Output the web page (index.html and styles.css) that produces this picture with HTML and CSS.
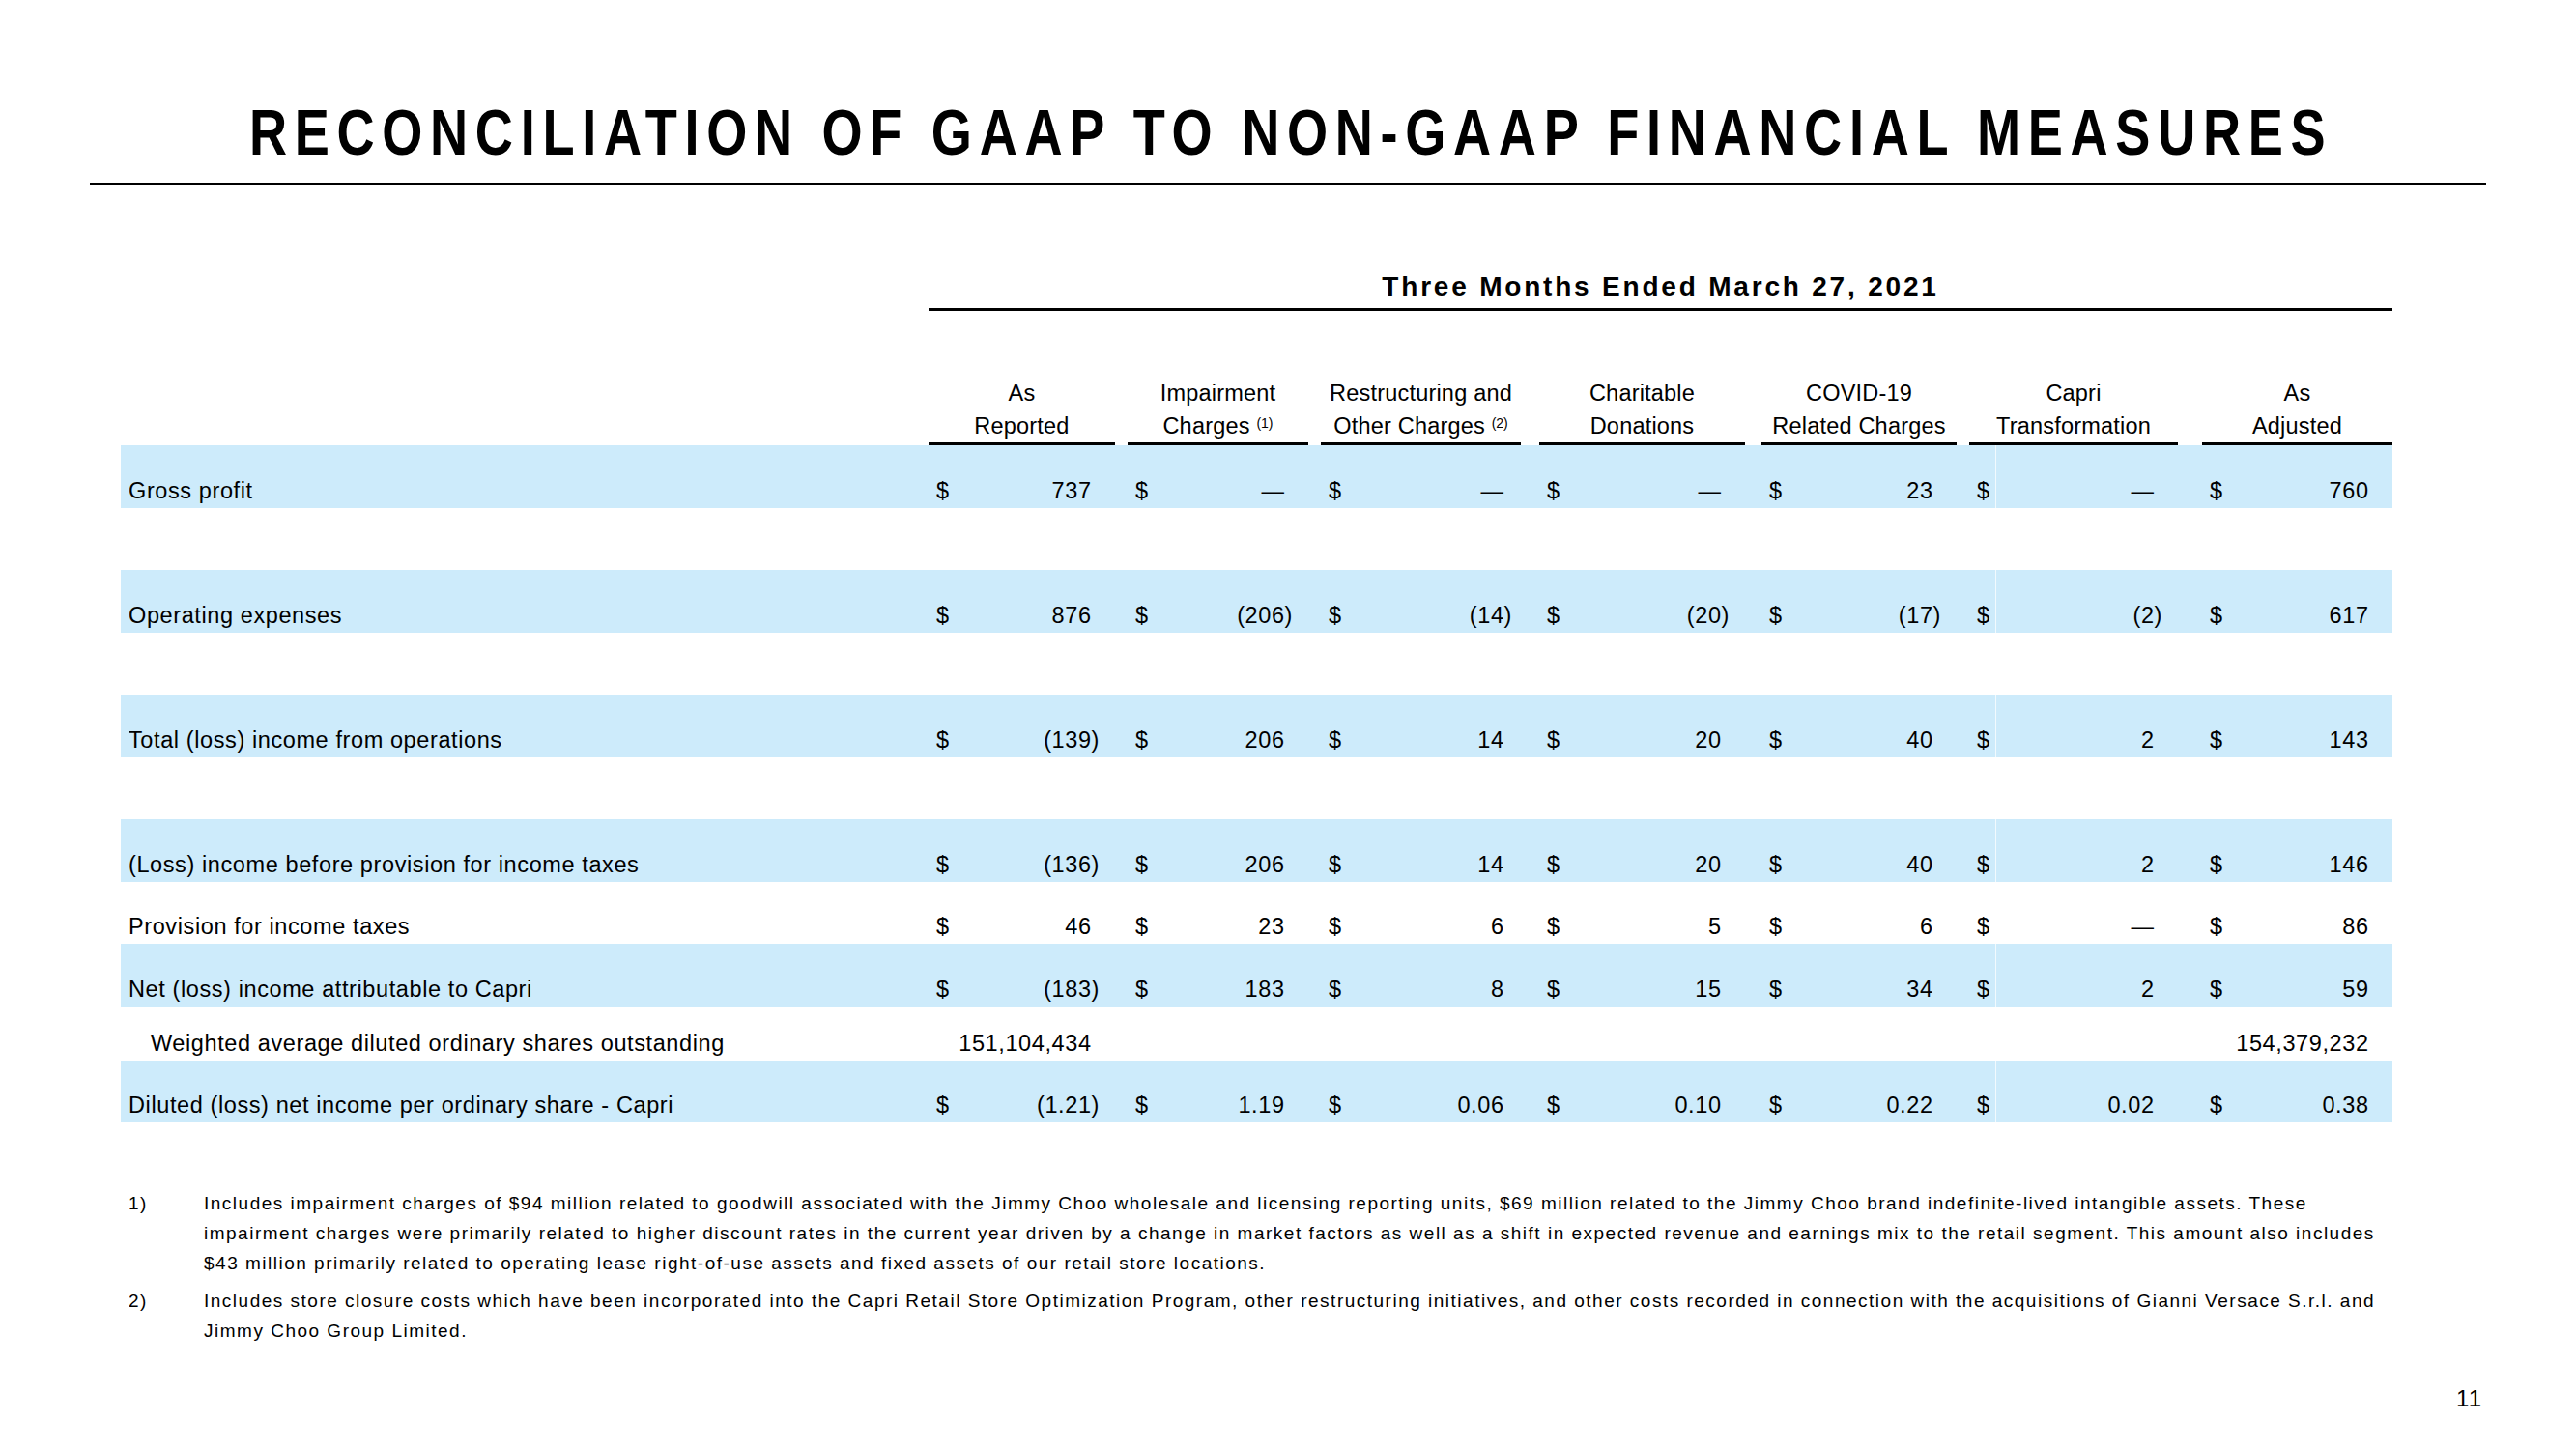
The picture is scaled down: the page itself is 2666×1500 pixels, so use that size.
FILE: index.html
```html
<!DOCTYPE html>
<html lang="en">
<head>
<meta charset="utf-8">
<title>Reconciliation of GAAP to Non-GAAP Financial Measures</title>
<link rel="stylesheet" href="styles.css">
</head>
<body>
<div class="slide">
  <h1 class="title">RECONCILIATION OF GAAP TO NON-GAAP FINANCIAL MEASURES</h1>
  <div class="title-rule"></div>

  <div class="table">
    <div class="row period-row">
      <div></div>
      <div class="period">Three Months Ended March 27, 2021</div>
    </div>

    <div class="row head-row">
      <div></div>
      <div class="h">As<br>Reported</div>
      <div class="h">Impairment<br>Charges <sup>(1)</sup></div>
      <div class="h">Restructuring and<br>Other Charges <sup>(2)</sup></div>
      <div class="h">Charitable<br>Donations</div>
      <div class="h">COVID-19<br>Related Charges</div>
      <div class="h">Capri<br>Transformation</div>
      <div class="h">As<br>Adjusted</div>
    </div>

    <div class="row band">
      <div class="lbl">Gross profit</div>
      <div class="v"><span>$</span><span class="n">737</span></div>
      <div class="v"><span>$</span><span class="n">—</span></div>
      <div class="v"><span>$</span><span class="n">—</span></div>
      <div class="v"><span>$</span><span class="n">—</span></div>
      <div class="v"><span>$</span><span class="n">23</span></div>
      <div class="v"><span>$</span><span class="n">—</span></div>
      <div class="v"><span>$</span><span class="n">760</span></div>
    </div>
    <div class="row spacer"></div>

    <div class="row band">
      <div class="lbl">Operating expenses</div>
      <div class="v"><span>$</span><span class="n">876</span></div>
      <div class="v"><span>$</span><span class="n neg">(206)</span></div>
      <div class="v"><span>$</span><span class="n neg">(14)</span></div>
      <div class="v"><span>$</span><span class="n neg">(20)</span></div>
      <div class="v"><span>$</span><span class="n neg">(17)</span></div>
      <div class="v"><span>$</span><span class="n neg">(2)</span></div>
      <div class="v"><span>$</span><span class="n">617</span></div>
    </div>
    <div class="row spacer"></div>

    <div class="row band">
      <div class="lbl">Total (loss) income from operations</div>
      <div class="v"><span>$</span><span class="n neg">(139)</span></div>
      <div class="v"><span>$</span><span class="n">206</span></div>
      <div class="v"><span>$</span><span class="n">14</span></div>
      <div class="v"><span>$</span><span class="n">20</span></div>
      <div class="v"><span>$</span><span class="n">40</span></div>
      <div class="v"><span>$</span><span class="n">2</span></div>
      <div class="v"><span>$</span><span class="n">143</span></div>
    </div>
    <div class="row spacer"></div>

    <div class="row band">
      <div class="lbl">(Loss) income before provision for income taxes</div>
      <div class="v"><span>$</span><span class="n neg">(136)</span></div>
      <div class="v"><span>$</span><span class="n">206</span></div>
      <div class="v"><span>$</span><span class="n">14</span></div>
      <div class="v"><span>$</span><span class="n">20</span></div>
      <div class="v"><span>$</span><span class="n">40</span></div>
      <div class="v"><span>$</span><span class="n">2</span></div>
      <div class="v"><span>$</span><span class="n">146</span></div>
    </div>

    <div class="row">
      <div class="lbl">Provision for income taxes</div>
      <div class="v"><span>$</span><span class="n">46</span></div>
      <div class="v"><span>$</span><span class="n">23</span></div>
      <div class="v"><span>$</span><span class="n">6</span></div>
      <div class="v"><span>$</span><span class="n">5</span></div>
      <div class="v"><span>$</span><span class="n">6</span></div>
      <div class="v"><span>$</span><span class="n">—</span></div>
      <div class="v"><span>$</span><span class="n">86</span></div>
    </div>

    <div class="row band">
      <div class="lbl">Net (loss) income attributable to Capri</div>
      <div class="v"><span>$</span><span class="n neg">(183)</span></div>
      <div class="v"><span>$</span><span class="n">183</span></div>
      <div class="v"><span>$</span><span class="n">8</span></div>
      <div class="v"><span>$</span><span class="n">15</span></div>
      <div class="v"><span>$</span><span class="n">34</span></div>
      <div class="v"><span>$</span><span class="n">2</span></div>
      <div class="v"><span>$</span><span class="n">59</span></div>
    </div>

    <div class="row short">
      <div class="lbl indent">Weighted average diluted ordinary shares outstanding</div>
      <div class="v end"><span class="n">151,104,434</span></div>
      <div></div><div></div><div></div><div></div><div></div>
      <div class="v end"><span class="n">154,379,232</span></div>
    </div>

    <div class="row band">
      <div class="lbl">Diluted (loss) net income per ordinary share - Capri</div>
      <div class="v"><span>$</span><span class="n neg">(1.21)</span></div>
      <div class="v"><span>$</span><span class="n">1.19</span></div>
      <div class="v"><span>$</span><span class="n">0.06</span></div>
      <div class="v"><span>$</span><span class="n">0.10</span></div>
      <div class="v"><span>$</span><span class="n">0.22</span></div>
      <div class="v"><span>$</span><span class="n">0.02</span></div>
      <div class="v"><span>$</span><span class="n">0.38</span></div>
    </div>
  </div>

  <div class="notes">
    <div class="note">
      <div class="num">1)</div>
      <div class="txt">Includes impairment charges of $94 million related to goodwill associated with the Jimmy Choo wholesale and licensing reporting units, $69 million related to the Jimmy Choo brand indefinite-lived intangible assets. These<br>impairment charges were primarily related to higher discount rates in the current year driven by a change in market factors as well as a shift in expected revenue and earnings mix to the retail segment. This amount also includes<br>$43 million primarily related to operating lease right-of-use assets and fixed assets of our retail store locations.</div>
    </div>
    <div class="note">
      <div class="num">2)</div>
      <div class="txt">Includes store closure costs which have been incorporated into the Capri Retail Store Optimization Program, other restructuring initiatives, and other costs recorded in connection with the acquisitions of Gianni Versace S.r.l. and<br>Jimmy Choo Group Limited.</div>
    </div>
  </div>

  <div class="footer"><span class="page">11</span></div>
</div>
</body>
</html>
```

FILE: styles.css
```css
* { box-sizing: border-box; }

html, body {
  margin: 0;
  padding: 0;
  background: #ffffff;
}

body {
  font-family: "Liberation Sans", Arial, sans-serif;
  color: #000;
}

.slide {
  width: 2666px;
  height: 1500px;
  overflow: hidden;
}

.title {
  margin: 0;
  padding: 104px 0 0 9.4px;
  font-size: 66px;
  line-height: 66px;
  font-weight: 700;
  letter-spacing: 9.4px;
  text-align: center;
  white-space: nowrap;
  transform: scaleX(0.82);
  transform-origin: 1329px 0;
}

.title-rule {
  margin: 19px 93px 0;
  height: 2px;
  background: #000;
}

.table {
  margin-left: 125px;
  width: 2351px;
}

.row {
  display: grid;
  grid-template-columns: 836px 206px 200px 226px 230px 215px 241px 197px;
  height: 64.5px;
  align-items: end;
  font-size: 23.5px;
  line-height: 28px;
  letter-spacing: 0.6px;
}

.row > :nth-child(2) { margin-right: 13px; }
.row > :nth-child(3) { margin-right: 13px; }
.row > :nth-child(4) { margin-right: 19px; }
.row > :nth-child(5) { margin-right: 17px; }
.row > :nth-child(6) { margin-right: 13px; }
.row > :nth-child(7) { margin-right: 25px; }
.row > :nth-child(8) { margin-right: 0; }

.row > .v:nth-child(4) { padding-right: 9px; }

.band {
  background: linear-gradient(to right, #cdebfb 1940px, #f2fafe 1940px, #f2fafe 1941px, #cdebfb 1941px);
}

.short { height: 56px; }

.period-row {
  margin-top: 92px;
  height: auto;
  align-items: start;
}

.period {
  grid-column: 2 / -1;
  margin-right: 0 !important;
  font-size: 28px;
  line-height: 28px;
  font-weight: 700;
  letter-spacing: 2.8px;
  text-align: center;
  padding-bottom: 8px;
  border-bottom: 3px solid #000;
}

.head-row {
  margin-top: 68px;
  height: auto;
  line-height: 34px;
  letter-spacing: 0.2px;
}

.h {
  text-align: center;
  border-bottom: 3px solid #000;
  white-space: nowrap;
}

.h sup {
  font-size: 14px;
  letter-spacing: 0;
  vertical-align: 6px;
  line-height: 0;
}

.lbl {
  padding: 0 0 4px 8px;
  white-space: nowrap;
}

.lbl.indent { padding-left: 31px; }

.v {
  display: flex;
  justify-content: space-between;
  padding: 0 16px 4px 8px;
  white-space: nowrap;
}

.v.end { justify-content: flex-end; }

.n::after {
  content: ")";
  visibility: hidden;
}

.n.neg::after { content: none; }

.notes {
  margin: 68px 0 0 133px;
  font-size: 19px;
  line-height: 31px;
  letter-spacing: 1.5px;
}

.note {
  display: grid;
  grid-template-columns: 78px auto;
}

.note + .note { margin-top: 8px; }

.txt { white-space: nowrap; }

.footer {
  display: flex;
  justify-content: flex-end;
  padding-right: 97px;
  margin-top: 43px;
}

.page {
  font-size: 24px;
  line-height: 24px;
  letter-spacing: 1px;
}
```
